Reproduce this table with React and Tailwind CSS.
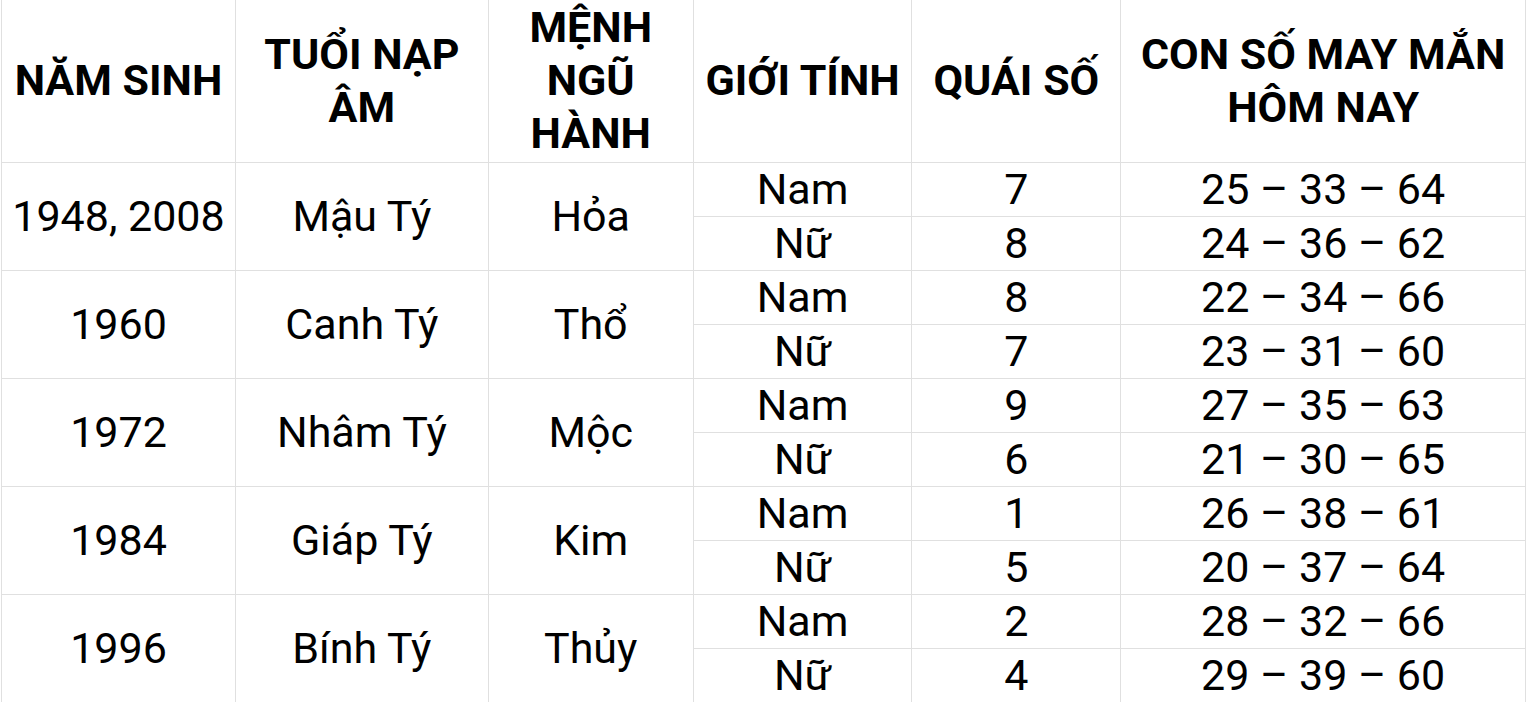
const rows = [
  { year: "1948, 2008", tuoi: "Mậu Tý", menh: "Hỏa", nam: ["7", "25 – 33 – 64"], nu: ["8", "24 – 36 – 62"] },
  { year: "1960", tuoi: "Canh Tý", menh: "Thổ", nam: ["8", "22 – 34 – 66"], nu: ["7", "23 – 31 – 60"] },
  { year: "1972", tuoi: "Nhâm Tý", menh: "Mộc", nam: ["9", "27 – 35 – 63"], nu: ["6", "21 – 30 – 65"] },
  { year: "1984", tuoi: "Giáp Tý", menh: "Kim", nam: ["1", "26 – 38 – 61"], nu: ["5", "20 – 37 – 64"] },
  { year: "1996", tuoi: "Bính Tý", menh: "Thủy", nam: ["2", "28 – 32 – 66"], nu: ["4", "29 – 39 – 60"] },
];

const th = "border border-[#e0e0e0] border-t-0 font-bold text-center align-middle px-1";
const td = "border border-[#e0e0e0] text-center align-middle h-[53px] p-0 whitespace-nowrap";

export default function App() {
  return (
    <div className="w-[1526px] h-[702px] overflow-hidden bg-white pl-px">
      <table
        className="table-fixed border-collapse text-black text-[43px] leading-[53px] border-l border-l-[#bdbdbd]"
        style={{ fontFamily: "Roboto, 'Noto Sans', sans-serif" }}
      >
        <colgroup>
          <col className="w-[234px]" />
          <col className="w-[253px]" />
          <col className="w-[205px]" />
          <col className="w-[219px]" />
          <col className="w-[209px]" />
          <col className="w-[405px]" />
        </colgroup>
        <thead>
          <tr className="h-[162px]">
            <th className={th}>NĂM SINH</th>
            <th className={th}>TUỔI NẠP ÂM</th>
            <th className={th}>MỆNH NGŨ HÀNH</th>
            <th className={th}>GIỚI TÍNH</th>
            <th className={th}>QUÁI SỐ</th>
            <th className={th}>CON SỐ MAY MẮN HÔM NAY</th>
          </tr>
        </thead>
        <tbody>
          {rows.map((r) => (
            <>
              <tr key={r.year + "a"}>
                <td rowSpan={2} className={td}>{r.year}</td>
                <td rowSpan={2} className={td}>{r.tuoi}</td>
                <td rowSpan={2} className={td}>{r.menh}</td>
                <td className={td}>Nam</td>
                <td className={td}>{r.nam[0]}</td>
                <td className={td}>{r.nam[1]}</td>
              </tr>
              <tr key={r.year + "b"}>
                <td className={td}>Nữ</td>
                <td className={td}>{r.nu[0]}</td>
                <td className={td}>{r.nu[1]}</td>
              </tr>
            </>
          ))}
        </tbody>
      </table>
    </div>
  );
}
